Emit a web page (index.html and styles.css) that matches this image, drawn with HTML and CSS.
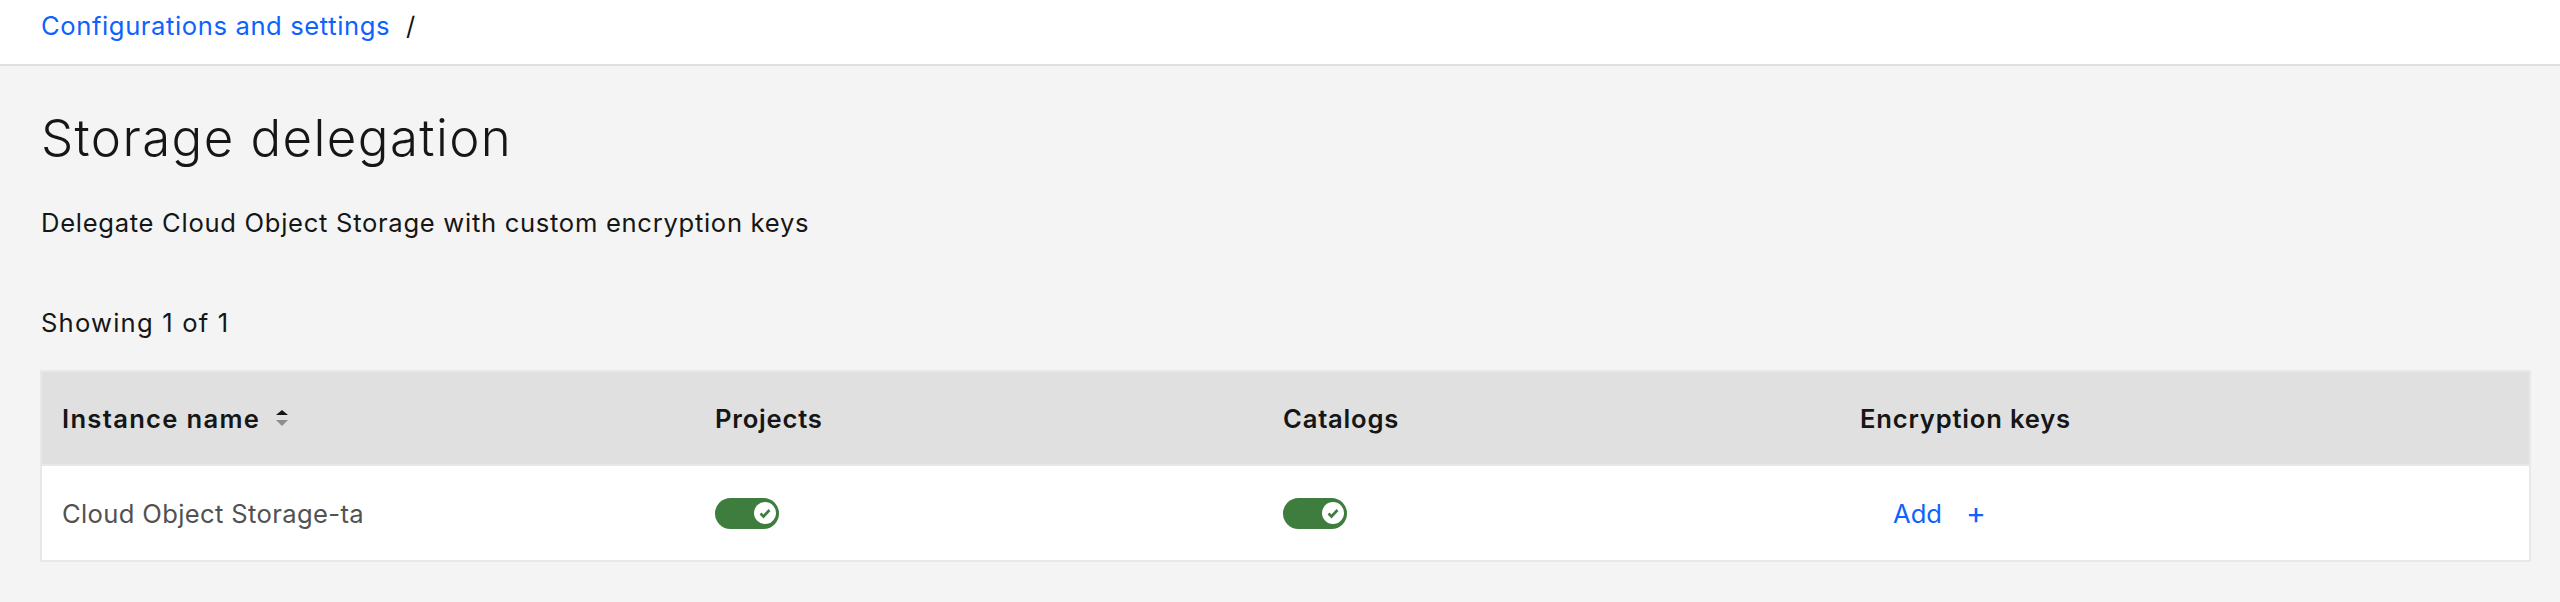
FILE: index.html
```html
<!DOCTYPE html>
<html lang="en">
<head>
<meta charset="utf-8">
<title>Storage delegation</title>
<link rel="stylesheet" href="styles.css">
</head>
<body>
<header class="topbar">
  <nav class="breadcrumb">
    <a class="crumb-link" href="#">Configurations and settings</a>
    <span class="crumb-sep">/</span>
  </nav>
</header>
<main class="page">
  <h1 class="title">Storage delegation</h1>
  <p class="desc">Delegate Cloud Object Storage with custom encryption keys</p>
  <p class="count">Showing 1 of 1</p>
  <div class="table">
    <div class="row head">
      <div class="cell col-name">Instance name
        <svg class="sort" width="12" height="16" viewBox="0 0 12 16" aria-hidden="true">
          <polygon points="0,5 6,0 12,5" fill="#161616"/>
          <polygon points="0,10 12,10 6,16" fill="#8d8d8d"/>
        </svg>
      </div>
      <div class="cell">Projects</div>
      <div class="cell">Catalogs</div>
      <div class="cell">Encryption keys</div>
    </div>
    <div class="row body">
      <div class="cell name">Cloud Object Storage-ta</div>
      <div class="cell"><span class="toggle"><span class="knob"><svg width="22" height="22" viewBox="0 0 22 22" aria-hidden="true"><path d="M6.5 11.5 L9.5 14.5 L15.5 8" fill="none" stroke="#3e7d3e" stroke-width="2.6"/></svg></span></span></div>
      <div class="cell"><span class="toggle"><span class="knob"><svg width="22" height="22" viewBox="0 0 22 22" aria-hidden="true"><path d="M6.5 11.5 L9.5 14.5 L15.5 8" fill="none" stroke="#3e7d3e" stroke-width="2.6"/></svg></span></span></div>
      <div class="cell"><a class="add" href="#">Add <span class="plus">+</span></a></div>
    </div>
  </div>
</main>
</body>
</html>
```
FILE: styles.css
```css
* { box-sizing: border-box; }
html, body { margin: 0; padding: 0; }
body {
  background: #f4f4f4;
  font-family: Inter, "Open Sans", sans-serif;
  color: #161616;
  width: 2560px;
  height: 602px;
  overflow: hidden;
}
.topbar {
  height: 66px;
  background: #ffffff;
  border-bottom: 2px solid #e0e0e0;
  display: flex;
  align-items: center;
  padding-left: 41px;
}
.breadcrumb {
  display: flex;
  align-items: center;
  font-size: 25.6px;
  line-height: 32px;
  margin-top: -12px;
}
.crumb-link {
  color: #0f62fe;
  text-decoration: none;
  letter-spacing: 0.6px;
}
.crumb-sep {
  margin-left: 16px;
  color: #161616;
}
.page {
  padding: 0 29px 0 40px;
}
.title {
  margin: 40px 0 0 1px;
  font-size: 51px;
  line-height: 64px;
  font-weight: 300;
  letter-spacing: 1.4px;
}
.desc {
  margin: 37px 0 0 1px;
  font-size: 25.6px;
  line-height: 32px;
  letter-spacing: 0.7px;
}
.count {
  margin: 68px 0 0 1px;
  font-size: 25.6px;
  line-height: 32px;
  letter-spacing: 1.2px;
}
.table {
  margin-top: 31px;
  border: 2px solid #e8e8e8;
  background: #e8e8e8;
  display: flex;
  flex-direction: column;
  gap: 2px;
}
.row {
  display: grid;
  grid-template-columns: 653px 568px 577px 1fr;
  align-items: center;
}
.head {
  height: 92px;
  background: #e0e0e0;
  font-weight: 600;
  font-size: 25.6px;
  letter-spacing: 0.8px;
}
.col-name { letter-spacing: 1.3px; }
.body {
  height: 94px;
  background: #ffffff;
  font-size: 25.6px;
}
.cell {
  padding-left: 20px;
  display: flex;
  align-items: center;
}
.sort { margin-left: 16px; }
.name {
  color: #525252;
  letter-spacing: 0.35px;
}
.toggle {
  width: 64px;
  height: 31px;
  border-radius: 16px;
  background: #3e7d3e;
  display: flex;
  align-items: center;
  justify-content: flex-end;
  padding-right: 3px;
}
.knob {
  width: 22px;
  height: 22px;
  border-radius: 50%;
  background: #ffffff;
  display: flex;
}
.add {
  margin-left: 33px;
  color: #0f62fe;
  text-decoration: none;
  display: flex;
  align-items: center;
}
.plus {
  margin-left: 24px;
  font-size: 30px;
}
```
